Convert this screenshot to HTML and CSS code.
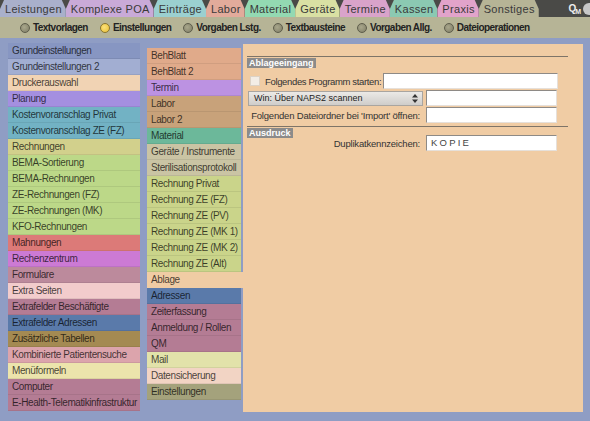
FILE: index.html
```html
<!DOCTYPE html>
<html>
<head>
    <meta charset="utf-8">
    <link rel="stylesheet" href="styles.css">
</head>
<body>
    <div class="tabs">
        <span class="tab t-leist">Leistungen</span>
        <span class="tab t-poa">Komplexe POA</span>
        <span class="tab t-eintr">Einträge</span>
        <span class="tab t-labor">Labor</span>
        <span class="tab t-mat">Material</span>
        <span class="tab t-ger">Geräte</span>
        <span class="tab t-term">Termine</span>
        <span class="tab t-kass">Kassen</span>
        <span class="tab t-prax">Praxis</span>
        <span class="tab t-sonst">Sonstiges</span>
        <div class="tabs-end">
            <span class="qm">Q<b>M</b></span>
            <span class="knob"></span>
        </div>
    </div>

    <div class="subnav">
        <span class="opt"><i></i>Textvorlagen</span>
        <span class="opt on"><i></i>Einstellungen</span>
        <span class="opt"><i></i>Vorgaben Lstg.</span>
        <span class="opt"><i></i>Textbausteine</span>
        <span class="opt"><i></i>Vorgaben Allg.</span>
        <span class="opt"><i></i>Dateioperationen</span>
    </div>

    <div class="main">
        <ul class="side">
            <li class="c-slate">Grundeinstellungen</li>
            <li class="c-sky">Grundeinstellungen 2</li>
            <li class="c-peach">Druckerauswahl</li>
            <li class="c-violet">Planung</li>
            <li class="c-teal">Kostenvoranschlag Privat</li>
            <li class="c-teal">Kostenvoranschlag ZE (FZ)</li>
            <li class="c-khaki">Rechnungen</li>
            <li class="c-lime">BEMA-Sortierung</li>
            <li class="c-lime">BEMA-Rechnungen</li>
            <li class="c-lime">ZE-Rechnungen (FZ)</li>
            <li class="c-lime">ZE-Rechnungen (MK)</li>
            <li class="c-lime">KFO-Rechnungen</li>
            <li class="c-red">Mahnungen</li>
            <li class="c-magenta">Rechenzentrum</li>
            <li class="c-mauve">Formulare</li>
            <li class="c-rose">Extra Seiten</li>
            <li class="c-plum">Extrafelder Beschäftigte</li>
            <li class="c-navy">Extrafelder Adressen</li>
            <li class="c-olive">Zusätzliche Tabellen</li>
            <li class="c-pink">Kombinierte Patientensuche</li>
            <li class="c-cream">Menüformeln</li>
            <li class="c-plum">Computer</li>
            <li class="c-plum">E-Health-Telematikinfrastruktur</li>
        </ul>

        <ul class="sub">
            <li class="c-salmon">BehBlatt</li>
            <li class="c-salmon">BehBlatt 2</li>
            <li class="c-lilac">Termin</li>
            <li class="c-tan">Labor</li>
            <li class="c-tan">Labor 2</li>
            <li class="c-jade">Material</li>
            <li class="c-stone">Geräte / Instrumente</li>
            <li class="c-stone">Sterilisationsprotokoll</li>
            <li class="c-pear">Rechnung Privat</li>
            <li class="c-pear">Rechnung ZE (FZ)</li>
            <li class="c-pear">Rechnung ZE (PV)</li>
            <li class="c-pear">Rechnung ZE (MK 1)</li>
            <li class="c-pear">Rechnung ZE (MK 2)</li>
            <li class="c-pear">Rechnung ZE (Alt)</li>
            <li class="sel">Ablage</li>
            <li class="c-navy">Adressen</li>
            <li class="c-plum">Zeiterfassung</li>
            <li class="c-plum">Anmeldung / Rollen</li>
            <li class="c-plum">QM</li>
            <li class="c-straw">Mail</li>
            <li class="c-blush">Datensicherung</li>
            <li class="c-moss">Einstellungen</li>
        </ul>

        <div class="panel">
            <div class="group-head"><span>Ablageeingang</span></div>

            <div class="row row-first">
                <span class="check"></span>
                <span class="run-label">Folgendes Programm starten:</span>
                <span class="field wide"></span>
            </div>
            <div class="row">
                <div class="select">
                    <span>Win: Über NAPS2 scannen</span>
                    <svg width="6" height="9" viewBox="0 0 6 9"><path d="M3 0L6 3.5H0Z M3 9L6 5.5H0Z" fill="#333"/></svg>
                </div>
                <span class="field"></span>
            </div>
            <div class="row">
                <span class="lbl-col">Folgenden Dateiordner bei 'Import' öffnen:</span>
                <span class="field"></span>
            </div>

            <div class="group-head second"><span>Ausdruck</span></div>

            <div class="row row-tight">
                <span class="lbl-col">Duplikatkennzeichen:</span>
                <span class="field spaced">KOPIE</span>
            </div>
        </div>
    </div>
</body>
</html>
```

FILE: styles.css
```css
/* page frame */

* {
    box-sizing: border-box;
}

body {
    margin: 0;
    width: 590px;
    height: 421px;
    overflow: hidden;
    background: #8f9dc4;
    font-family: "Liberation Sans", Arial, sans-serif;
    font-size: 10px;
    color: #333;
}

/* top tab bar */

.tabs {
    display: flex;
    height: 17px;
    background: #4a4a47;
}

.tab {
    height: 17px;
    line-height: 18px;
    padding: 0 4px 0 5px;
    font-size: 11px;
    letter-spacing: 0.3px;
    color: #3a3a3a;
    white-space: nowrap;
    clip-path: polygon(4px 0, calc(100% - 4px) 0, 100% 9px, 100% 100%, 0 100%, 0 9px);
}

.t-leist { background: #a9b0cb; }
.t-poa   { background: #c9aad8; }
.t-eintr { background: #9bd0d0; }
.t-labor { background: #e2ab9b; }
.t-mat   { background: #93d9b2; }
.t-ger   { background: #d9e0a3; }
.t-term  { background: #d9a3ca; }
.t-kass  { background: #8bc9b2; }
.t-prax  { background: #e2a3ca; }
.t-sonst { background: #b6b496; }

.tabs-end {
    flex: 1;
    display: flex;
    justify-content: flex-end;
    align-items: center;
}

.qm {
    font-size: 10px;
    font-weight: bold;
    color: #eee;
    letter-spacing: -1px;
    margin-right: 3px;
}

.qm b {
    font-size: 7px;
    position: relative;
    top: 2px;
}

.knob {
    width: 12px;
    height: 12px;
    border-radius: 50%;
    background: #c8c8c8;
    margin-right: -5px;
}

/* radio row */

.subnav {
    display: flex;
    align-items: center;
    gap: 12px;
    height: 21px;
    padding-left: 20px;
    background: #b6b496;
}

.opt {
    display: flex;
    align-items: center;
    font-weight: bold;
    font-size: 10px;
    letter-spacing: -0.55px;
    color: #222;
}

.opt i {
    width: 10px;
    height: 10px;
    margin-right: 3px;
    border-radius: 50%;
    border: 1px solid #5e5d4b;
    background: radial-gradient(circle at 40% 40%, #a9a78c, #7f7d66);
}

.opt.on i {
    border-color: #8a7630;
    background: radial-gradient(circle at 40% 40%, #fbe27a, #e9be34);
}

/* lists */

.main {
    display: flex;
    align-items: flex-start;
}

.side,
.sub {
    list-style: none;
    margin: 0;
    padding: 0;
}

.side {
    margin: 5px 0 0 8px;
    width: 132px;
}

.sub {
    margin: 10px 0 0 7px;
    width: 94px;
}

.side li,
.sub li {
    height: 16px;
    line-height: 16px;
    padding-left: 4px;
    white-space: nowrap;
    overflow: hidden;
    letter-spacing: -0.4px;
    color: rgba(0, 0, 0, 0.72);
    border-bottom: 1px solid rgba(0, 0, 0, 0.07);
}

.sub li.sel {
    margin-right: -2px;
    background: #f0cca4;
    border-bottom: none;
}

.c-slate   { background: #8796c2; }
.c-sky     { background: #a2aed2; }
.c-peach   { background: #f1d3b4; }
.c-violet  { background: #a48fe0; }
.c-teal    { background: #72b2c4; }
.c-khaki   { background: #d2d08c; }
.c-lime    { background: #bcd888; }
.c-red     { background: #dc7a78; }
.c-magenta { background: #cc7ad4; }
.c-mauve   { background: #bc8a9c; }
.c-rose    { background: #f2cccc; }
.c-plum    { background: #b47c94; }
.c-navy    { background: #5a7aaa; }
.c-olive   { background: #a48a52; }
.c-pink    { background: #dca4ac; }
.c-cream   { background: #ece4ac; }
.c-salmon  { background: #e0aa8a; }
.c-lilac   { background: #bc92e2; }
.c-tan     { background: #c8a27a; }
.c-jade    { background: #6cb89a; }
.c-stone   { background: #cac4a4; }
.c-pear    { background: #cad48a; }
.c-straw   { background: #e2e2aa; }
.c-blush   { background: #f2d4c4; }
.c-moss    { background: #a4a27c; }

/* settings panel */

.panel {
    margin: 6px 0 0 2px;
    width: 340px;
    height: 368px;
    padding: 12px 15px 0 4px;
    background: #f0cca4;
}

.group-head {
    border-top: 1px solid #7e7468;
    height: 11px;
}

.group-head span {
    display: inline-block;
    height: 10px;
    line-height: 10px;
    padding: 0 2px;
    background: #8c8b8a;
    color: #fff;
    font-weight: bold;
    font-size: 9px;
}

.group-head.second {
    margin-top: 3px;
}

.row {
    display: flex;
    align-items: center;
    height: 16px;
    margin-top: 1px;
    font-size: 9.5px;
    letter-spacing: -0.2px;
    white-space: nowrap;
}

.row-first {
    margin-top: 6px;
}

.row-tight {
    margin-top: -2px;
}

.check {
    width: 10px;
    height: 10px;
    margin: 0 5px 0 3px;
    background: #f3ede6;
    border: 1px solid #dcd2c6;
}

.run-label {
    width: 116px;
    letter-spacing: -0.35px;
}

.lbl-col {
    width: 176px;
    padding-right: 3px;
    text-align: right;
}

.field {
    height: 16px;
    width: 131px;
    margin-left: 3px;
    background: #fff;
    border: 1px solid #e6e0da;
    border-top-color: #8e8a86;
    border-left-color: #8e8a86;
}

.field.wide {
    width: 175px;
    margin-left: 2px;
}

.field.spaced {
    padding-left: 4px;
    line-height: 14px;
    font-size: 9.5px;
    letter-spacing: 2.2px;
    color: #444;
}

.select {
    display: flex;
    align-items: center;
    justify-content: space-between;
    width: 175px;
    height: 15px;
    margin-left: 1px;
    padding: 0 4px 0 5px;
    font-size: 9px;
    letter-spacing: 0;
    color: #222;
    background: linear-gradient(#ebe9e6, #cfcdca);
    border: 1px solid #a9a5a0;
}
```
